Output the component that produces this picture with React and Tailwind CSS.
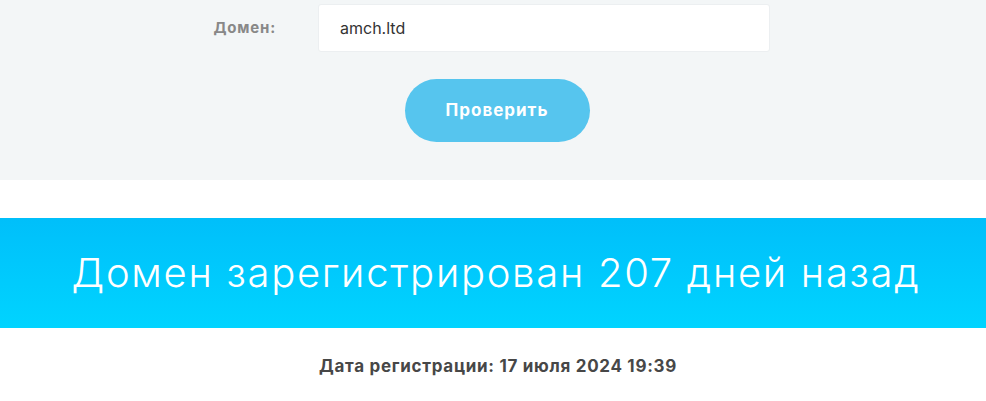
export default function App() {
    return (
        <div className="min-h-screen bg-white" style={{ fontFamily: 'Inter, "Noto Sans", sans-serif' }}>
            <div className="bg-[#f3f6f7] h-[180px] pt-[4px]">
                <div className="flex items-center">
                    <label className="w-[318px] pr-[42px] text-right text-[15px] font-bold text-[#888] tracking-[0.8px]">Домен:</label>
                    <div className="w-[452px] h-[48px] bg-white border border-[#eceff1] rounded-[3px] flex items-center px-[21px] text-[16px] text-[#333]">
                        amch.ltd
                    </div>
                </div>
                <div className="flex justify-center mt-[27px] pl-[8px]">
                    <button className="w-[185px] h-[63px] rounded-full bg-[#56c5ee] text-white text-[17px] font-bold tracking-[1px]">
                        Проверить
                    </button>
                </div>
            </div>
            <div className="h-[38px]" />
            <div className="h-[110px] bg-gradient-to-b from-[#00bffa] to-[#00d4ff] flex items-center justify-center">
                <h1 className="text-white text-[40px] font-light tracking-[1.7px] pl-[6px]">Домен зарегистрирован 207 дней назад</h1>
            </div>
            <div className="pt-[26px] pl-[10px] text-center text-[17px] font-bold text-[#474747] tracking-[0.7px]">
                Дата регистрации: 17 июля 2024 19:39
            </div>
        </div>
    );
}
